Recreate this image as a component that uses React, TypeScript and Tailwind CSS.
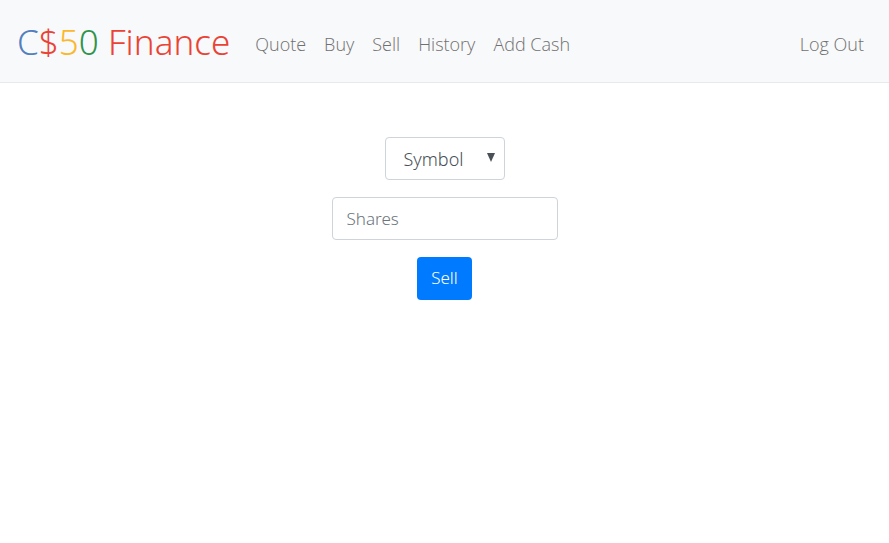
import React from "react";

const links = ["Quote", "Buy", "Sell", "History", "Add Cash"];

export default function App() {
  return (
    <div className="min-h-screen bg-white font-['Open_Sans',sans-serif] text-lg text-[#495057]">
      <nav className="flex items-center border-b border-[#e7eaed] bg-[#f8f9fa] pt-[10px] pr-[18px] pb-2 pl-[17px]">
        <a href="#" className="mr-4 py-1 font-['Noto_Sans','Open_Sans',sans-serif] text-[35px] leading-14 font-light whitespace-nowrap text-[#ea4335]">
          <span className="text-[#537fbe]">C</span>
          <span>$</span>
          <span className="text-[#fbb82e]">5</span>
          <span className="text-[#2e944b]">0</span> Finance
        </a>
        <div className="flex grow items-center justify-between pt-[3px] font-light text-[#707070]">
          <ul className="flex">
            {links.map((label) => (
              <li key={label}>
                <a href="#" className="block px-[9px] py-2 whitespace-nowrap">{label}</a>
              </li>
            ))}
          </ul>
          <a href="#" className="px-[7px] py-2 whitespace-nowrap">Log Out</a>
        </div>
      </nav>
      <main className="px-4 pt-[54px]">
        <form className="flex flex-col items-center gap-[17px] font-['Noto_Sans','Open_Sans',sans-serif] text-[17px] font-light" onSubmit={(e) => e.preventDefault()}>
          <div className="relative">
            <select aria-label="Symbol" className="block h-[43px] w-[120px] appearance-none rounded border border-[#ced4da] bg-white pl-[18px] text-lg">
              <option>Symbol</option>
            </select>
            <svg className="pointer-events-none absolute top-4 right-[9px]" width="10" height="9" viewBox="0 0 10 9" aria-hidden="true">
              <path d="M1 0h8L5 9z" fill="#495057" />
            </svg>
          </div>
          <input aria-label="Shares" placeholder="Shares" type="number" className="h-[43px] w-[226px] rounded border border-[#ced4da] px-[14px] placeholder:text-[#6c757d]" />
          <button type="submit" className="h-[43px] rounded bg-[#007bff] px-[14px] text-white">Sell</button>
        </form>
      </main>
    </div>
  );
}
